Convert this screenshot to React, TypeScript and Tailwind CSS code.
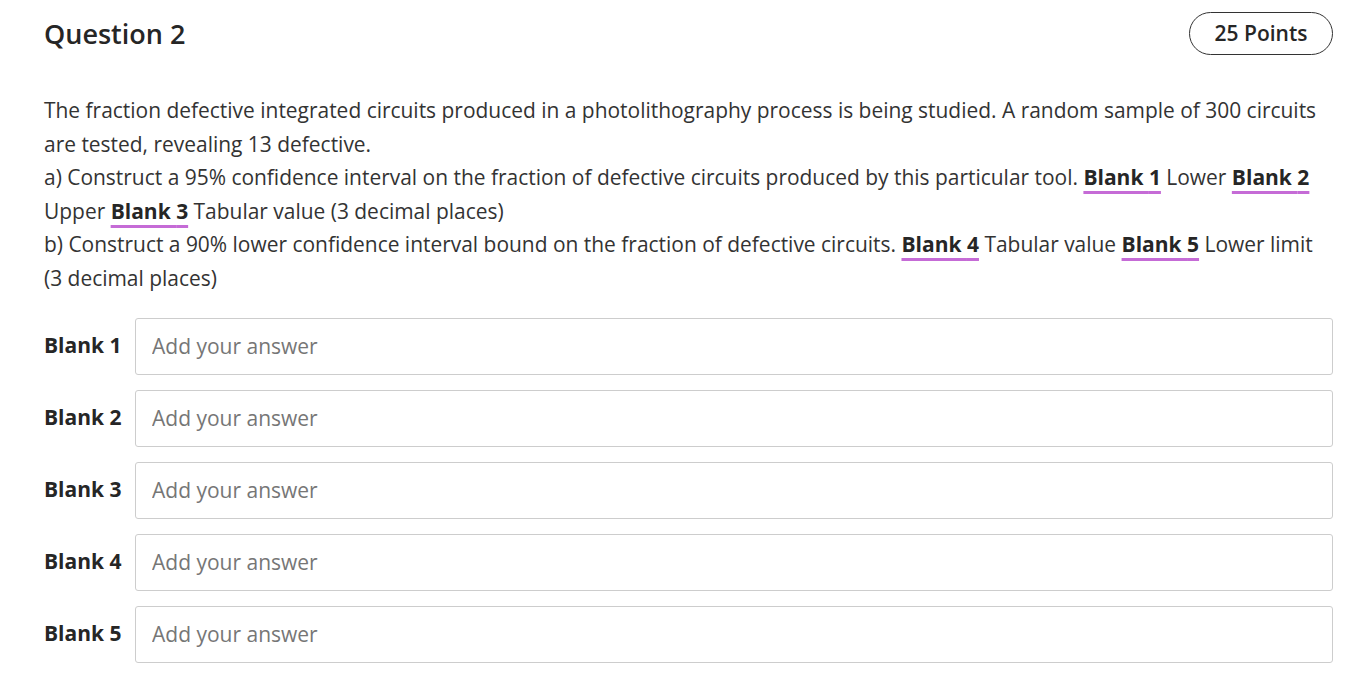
import React from 'react'

const font = { fontFamily: '"Open Sans", "Noto Sans", sans-serif' }

function Blank({ n }: { n: number }) {
  return (
    <b className="font-bold text-[21px] text-[#262626] underline decoration-[3px] decoration-[#c56bd6] underline-offset-[6px]">
      Blank {n}
    </b>
  )
}

export default function App() {
  const blanks = [1, 2, 3, 4, 5]
  return (
    <div className="min-h-screen bg-white text-[#262626] pl-[44px] pr-[26px] pt-[12px]" style={font}>
      <div className="flex items-center justify-between">
        <h2 className="text-[27px] font-semibold leading-none">Question 2</h2>
        <div className="h-[43px] w-[144px] flex items-center justify-center rounded-full border border-[#333] text-[21px] font-semibold">
          25 Points
        </div>
      </div>

      <p className="mt-[39px] text-[20.95px] leading-[33.6px] pr-[8px] text-[#333]">
        The fraction defective integrated circuits produced in a photolithography process is being studied. A random sample of 300 circuits are tested, revealing 13 defective.
        <br />
        a) Construct a 95% confidence interval on the fraction of defective circuits produced by this particular tool. <Blank n={1} /> Lower <Blank n={2} /> Upper <Blank n={3} /> Tabular value (3 decimal places)
        <br />
        b) Construct a 90% lower confidence interval bound on the fraction of defective circuits. <Blank n={4} /> Tabular value <Blank n={5} /> Lower limit (3 decimal places)
      </p>

      <div className="mt-[22px] flex flex-col gap-[15px]">
        {blanks.map(n => (
          <div key={n} className="flex items-center">
            <label className="w-[91px] shrink-0 text-[21px] font-bold">Blank {n}</label>
            <input
              className="flex-1 h-[57px] rounded-[3px] border border-[#cdcdcd] px-[16px] text-[21px] placeholder:text-[#767676] outline-none"
              style={font}
              placeholder="Add your answer"
            />
          </div>
        ))}
      </div>
    </div>
  )
}
